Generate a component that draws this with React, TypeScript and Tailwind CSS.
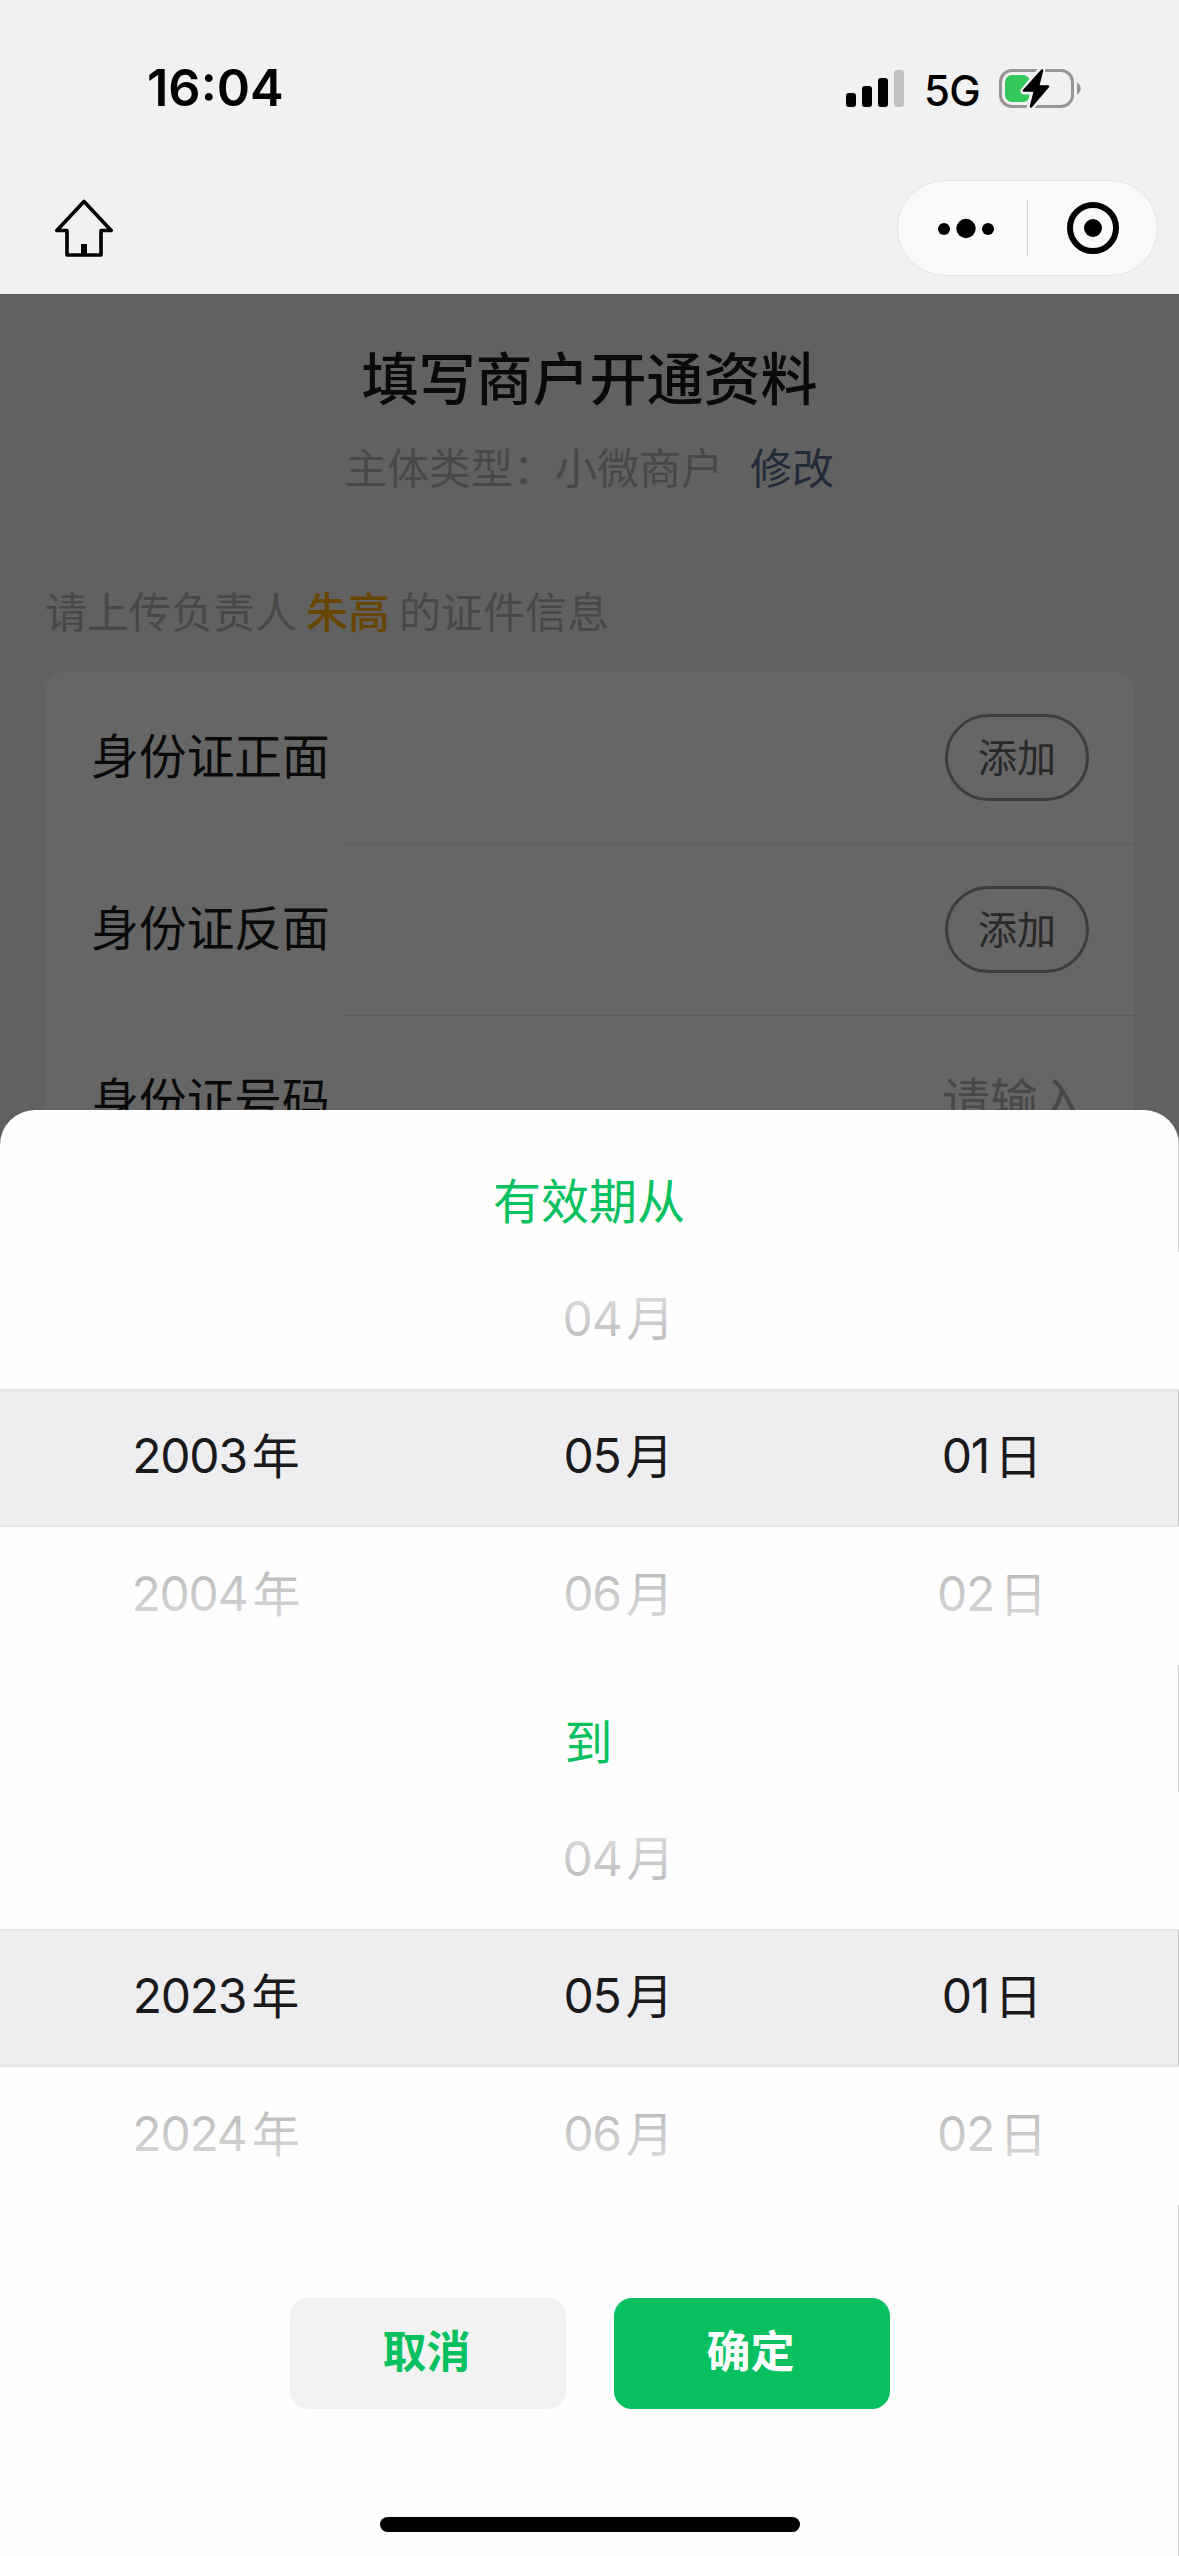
interface Row {
  year: string; month: string; day: string;
}

const START: Row[] = [
  { year: '', month: '04', day: '' },
  { year: '2003', month: '05', day: '01' },
  { year: '2004', month: '06', day: '02' },
];

const END: Row[] = [
  { year: '', month: '04', day: '' },
  { year: '2023', month: '05', day: '01' },
  { year: '2024', month: '06', day: '02' },
];

const ROW_STYLES = ['h-[137px]', 'h-[138px] border-y-2 border-r border-y-[#e6e6e6] border-r-[#c4c4c6] bg-[#eeeef0]', 'h-[138px]'];

function Cell({ value, unit, className }: { value: string; unit: string; className: string }) {
  return (
    <div className={`flex shrink-0 items-center justify-center gap-[5px] text-[48px] leading-none text-[#1a1a1c] ${className}`}>
      {value && (
        <>
          <span className="font-['Inter',sans-serif] tracking-[-1.200px]">{value}</span>
          <span className="pb-[7px]">{unit}</span>
        </>
      )}
    </div>
  );
}

function Picker({ rows }: { rows: Row[] }) {
  return (
    <div className="relative h-[413px]">
      {rows.map((r, i) => (
        <div key={i} className={`flex pb-1 ${ROW_STYLES[i]}`}>
          <Cell value={r.year} unit="年" className="w-[432px]" />
          <Cell value={r.month} unit="月" className="w-[373px]" />
          <Cell value={r.day} unit="日" className="w-[374px]" />
        </div>
      ))}
      <div className="absolute inset-x-0 top-0 h-[137px] bg-linear-to-b from-[#fefefe]/95 to-[#fefefe]/60" />
      <div className="absolute inset-x-0 bottom-0 h-[138px] bg-linear-to-t from-[#fefefe]/95 to-[#fefefe]/60" />
    </div>
  );
}

function StatusBar() {
  return (
    <div className="flex h-[176px] items-center justify-between pl-[147px] pr-[97px] pt-px font-['Inter',sans-serif] text-black">
      <span className="text-[50.500px] font-semibold leading-none">16:04</span>
      <div className="flex items-center">
        <svg width="58" height="38" viewBox="0 0 58 38">
          <rect x="0" y="23" width="10" height="14" rx="3" />
          <rect x="16" y="16" width="10" height="21" rx="3" />
          <rect x="32" y="8" width="10" height="29" rx="3" />
          <rect x="48" y="0" width="10" height="37" rx="3" fill="#c1c1c1" />
        </svg>
        <span className="ml-5 w-[58px] pt-1 text-[42px] font-medium leading-none tracking-[-0.800px]">5G</span>
        <svg className="ml-[17px]" width="83" height="42" viewBox="0 0 83 42">
          <rect x="1.5" y="2.5" width="72" height="36" rx="11.5" fill="none" stroke="#969696" strokeWidth="3" />
          <path d="M78 14.500c5 2 5 10 0 12z" fill="#969696" />
          <rect x="6" y="7" width="25" height="27" rx="7" fill="#34c759" />
          <path d="M43 1 25 23h10l-4 17 19-21H40z" fill="#000" stroke="#f1f1f1" strokeWidth="7" strokeLinejoin="round" />
          <path d="M43 2.500 25 22.500h11l-4 16 17-20H39z" fill="#000" stroke="#000" strokeWidth="2.500" strokeLinejoin="round" />
        </svg>
      </div>
    </div>
  );
}

function NavBar() {
  return (
    <div className="flex h-[118px] items-start justify-between pl-[54px] pr-[21px] pt-1">
      <svg className="mt-[18px]" width="60" height="62" viewBox="0 0 60 62" fill="none" stroke="#000" strokeWidth="3.600" strokeLinejoin="round">
        <path d="M30 3.500 2.800 32.500H13V57H47V32.500H57.200z" />
        <path d="M30 46v11" strokeWidth="6" />
      </svg>
      <div className="flex h-[96px] w-[261px] items-center rounded-full border border-[#e4e4e4] bg-[#fafafa]">
        <svg width="258" height="94" viewBox="0 0 258 94">
          <circle cx="46" cy="48" r="6" />
          <circle cx="68" cy="47.500" r="9.700" />
          <circle cx="90" cy="48" r="6" />
          <path d="M129.500 19v56" stroke="#cfcfcf" />
          <circle cx="195" cy="47" r="23" fill="none" stroke="#000" strokeWidth="6" />
          <circle cx="195" cy="47" r="9" />
        </svg>
      </div>
    </div>
  );
}

function FormRow({ label, last }: { label: string; last?: boolean }) {
  return (
    <div className="h-[172px] pl-[46px]">
      <div className="flex h-[171px] items-center justify-between pr-[45px]">
        <span className="pb-[10px] text-[48px] leading-none tracking-[-0.300px] text-[#191919]">{label}</span>
        {last ? (
          <span className="pb-[9px] pr-[3px] text-[48px] leading-none text-[#b4b4b4]">请输入</span>
        ) : (
          <button className="h-[87px] w-[144px] rounded-full border-3 border-[#999] pb-[5px] text-[39px] leading-none text-[#666]">添加</button>
        )}
      </div>
      {!last && <div className="ml-[254px] h-px bg-[#e3e3e3]" />}
    </div>
  );
}

export default function App() {
  return (
    <div className="flex h-[2556px] w-[1179px] flex-col overflow-hidden bg-[#f1f1f1] font-['Noto_Sans_CJK_SC',sans-serif]">
      <header className="h-[294px]">
        <StatusBar />
        <NavBar />
      </header>

      <div className="relative flex-1 overflow-hidden bg-[#f2f2f2]">
        <main className="px-[45px] pt-[51px]">
          <h1 className="text-center text-[57px] font-medium leading-[60px] text-[#191919]">填写商户开通资料</h1>
          <div className="mt-9 flex justify-center gap-[27px] text-[42px] leading-[50px]">
            <span className="text-[#b4b4b4]">主体类型：小微商户</span>
            <a className="text-[#576b95]">修改</a>
          </div>
          <p className="mt-[94px] flex gap-[9px] text-[42px] leading-[50px] text-[#b4b4b4]">
            <span>请上传负责人</span>
            <span className="font-medium text-[#ffb000]">朱高</span>
            <span>的证件信息</span>
          </p>
          <div className="mt-[37px] rounded-t-[20px] bg-white">
            <FormRow label="身份证正面" />
            <FormRow label="身份证反面" />
            <FormRow label="身份证号码" last />
          </div>
        </main>

        <div className="absolute inset-0 bg-black/60" />

        <section className="absolute inset-x-0 bottom-0 flex h-[1446px] flex-col overflow-hidden rounded-t-[35px] bg-[#fefefe]">
          <h2 className="flex h-[142px] items-center justify-center border-r border-[#d0d0d0] pt-[33px] text-[48px] leading-none text-[#07c160]">有效期从</h2>
          <Picker rows={START} />
          <h2 className="flex h-[127px] items-center justify-center border-r border-[#d0d0d0] pr-px pt-5 text-[48px] leading-none text-[#07c160]">到</h2>
          <Picker rows={END} />
          <div className="flex flex-1 flex-col items-center border-r border-[#d0d0d0] pl-[2px]">
            <div className="mt-[93px] flex gap-12 text-[44px] font-bold leading-none">
              <button className="h-[111px] w-[276px] rounded-[18px] bg-[#f2f2f2] pb-[9px] pr-[3px] text-[#07c160]">取消</button>
              <button className="h-[111px] w-[276px] rounded-[18px] bg-[#07c160] pb-[9px] pr-[3px] text-white">确定</button>
            </div>
            <div className="mt-[108px] h-[15px] w-[420px] rounded-full bg-black" />
          </div>
        </section>
      </div>
    </div>
  );
}
